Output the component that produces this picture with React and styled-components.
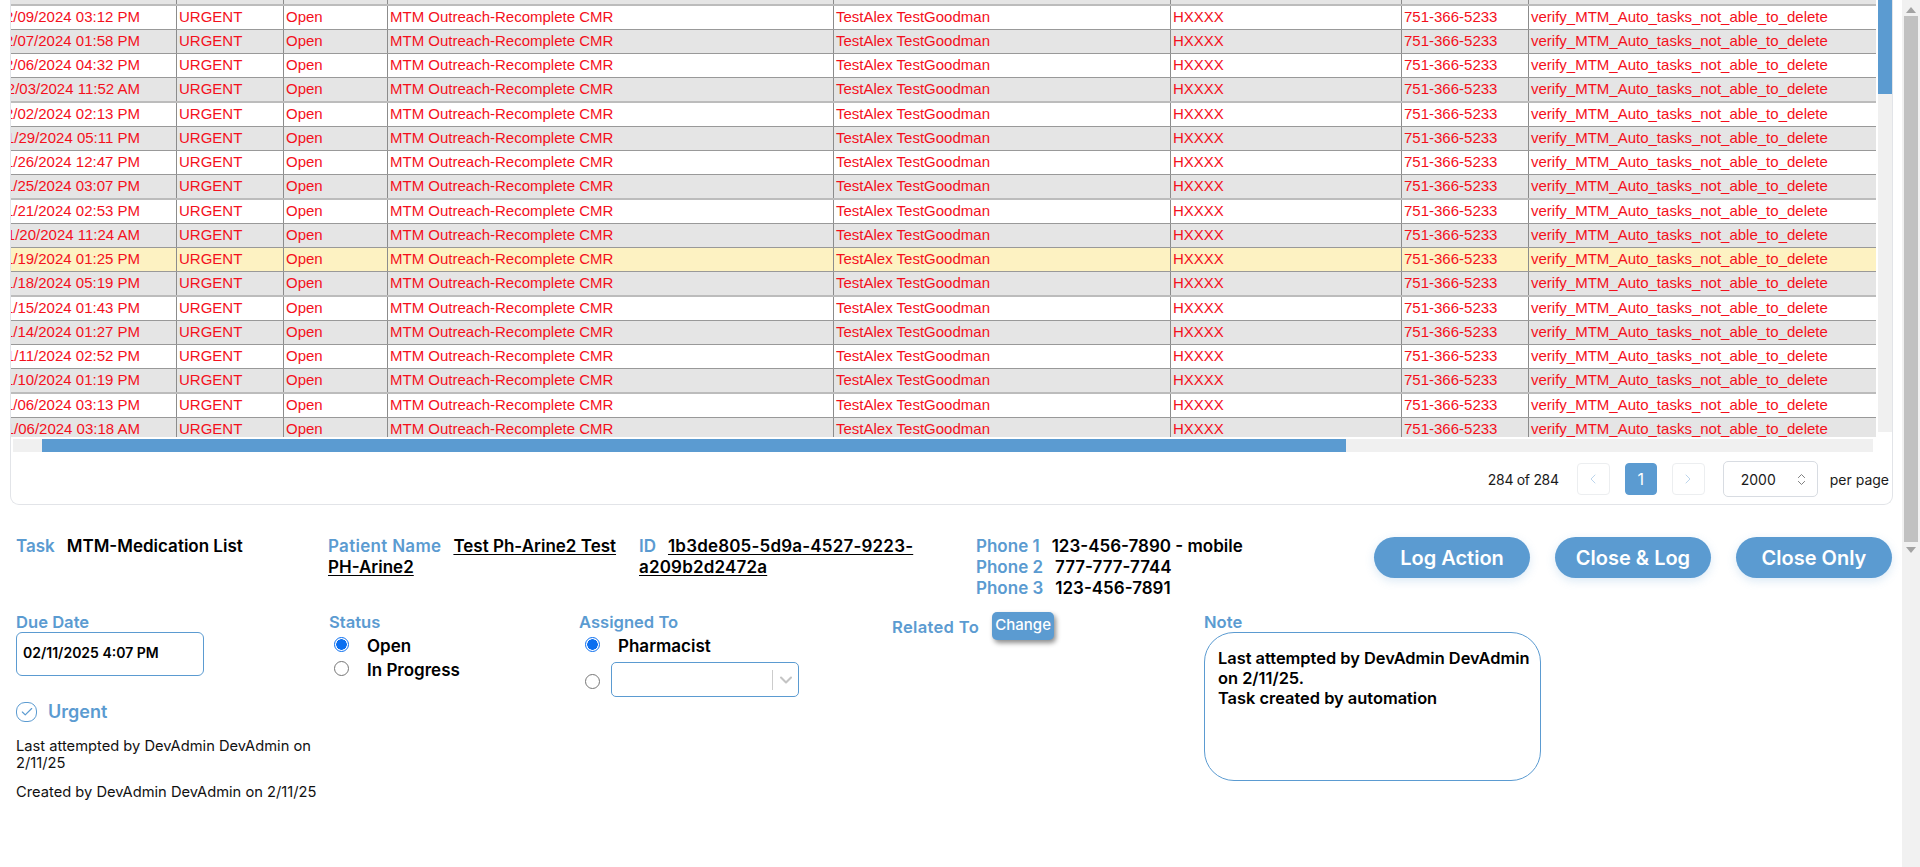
import styled, { createGlobalStyle } from 'styled-components'
import { ChevronLeft, ChevronRight, ChevronDown, ChevronsUpDown, Check } from 'lucide-react'

const GlobalStyle = createGlobalStyle`
  html, body { margin: 0; padding: 0; height: 100%; overflow: hidden; background: #fff; }
  * { box-sizing: border-box; }
`

const dates = [
  '12/09/2024 03:12 PM', '12/07/2024 01:58 PM', '12/06/2024 04:32 PM', '12/03/2024 11:52 AM',
  '12/02/2024 02:13 PM', '11/29/2024 05:11 PM', '11/26/2024 12:47 PM', '11/25/2024 03:07 PM',
  '11/21/2024 02:53 PM', '11/20/2024 11:24 AM', '11/19/2024 01:25 PM', '11/18/2024 05:19 PM',
  '11/15/2024 01:43 PM', '11/14/2024 01:27 PM', '11/11/2024 02:52 PM', '11/10/2024 01:19 PM',
  '11/06/2024 03:13 PM', '11/06/2024 03:18 AM',
]

const BLUE = '#5b9bd1'

const Page = styled.div`
  display: flex;
  width: 1920px;
  height: 867px;
  overflow: hidden;
`
const Content = styled.div`
  width: 1902px;
  font-family: Inter, "Liberation Sans", sans-serif;
`
const Card = styled.div`
  width: 1883px;
  height: 505px;
  margin-left: 10px;
  border: 1px solid #e2e4e8;
  border-top: none;
  border-radius: 0 0 9px 9px;
  display: flex;
  flex-direction: column;
`
const TableArea = styled.div`
  display: flex;
  height: 437px;
`
const TableClip = styled.div`
  width: 1865px;
  height: 437px;
  overflow: hidden;
`
const Table = styled.div`
  margin-top: -20px;
  margin-left: -27px;
  width: 1892px;
  font-family: "Liberation Sans", Arial, sans-serif;
  font-size: 15px;
  color: #f4101c;
`
const Row = styled.div`
  display: grid;
  grid-template-columns: 193px 107px 104px 446px 337px 231px 127px 347px;
  height: ${p => (p.$long ? 25 : 24)}px;
  background: ${p => (p.$active ? '#fdf2c2' : p.$odd ? '#e5e5e5' : '#fff')};
  border-top: ${p => (p.$long ? '2px solid #bcbcbc' : '1px solid #999')};
`
const Cell = styled.div`
  padding: 0 0 0 2px;
  border-right: 1px solid #8c8c8c;
  line-height: 22px;
  white-space: nowrap;
  overflow: hidden;
  &:last-child { border-right: none; }
`
const DateCell = styled(Cell)`
  padding-left: 0;
  text-align: right;
  padding-right: 36px;
`
const VTrack = styled.div`
  width: 14px;
  height: 432px;
  margin-left: 2px;
  background: #f0f0f0;
`
const VThumb = styled.div`
  width: 14px;
  height: 94px;
  background: ${BLUE};
`
const HTrack = styled.div`
  width: 1860px;
  height: 13px;
  margin: 2px 0 0 2px;
  background: #f0f0f0;
  padding-left: 29px;
`
const HThumb = styled.div`
  width: 1304px;
  height: 13px;
  background: ${BLUE};
`
const Pager = styled.div`
  display: flex;
  align-items: center;
  justify-content: flex-end;
  height: 36px;
  margin-top: 9px;
  padding-right: 3px;
  font-size: 14px;
  color: #1a1a1a;
`
const PageCount = styled.span`
  margin-right: 18px;
  letter-spacing: -0.3px;
`
const PageBtn = styled.div`
  width: ${p => (p.$active ? 32 : 33)}px;
  height: 32px;
  margin-right: 15px;
  border-radius: 4px;
  display: flex;
  align-items: center;
  justify-content: center;
  border: 1px solid ${p => (p.$active ? BLUE : '#eceef0')};
  background: ${p => (p.$active ? BLUE : '#fff')};
  color: ${p => (p.$active ? '#fff' : '#bcd5ec')};
  font-size: 16px;
`
const PerPage = styled.div`
  width: 95px;
  height: 36px;
  margin: 0 12px 0 3px;
  padding: 0 8px 0 17px;
  border: 1px solid #d8dce2;
  border-radius: 5px;
  display: flex;
  align-items: center;
  justify-content: space-between;
  color: #1a1a1a;
`
const TopRow = styled.div`
  display: flex;
  align-items: flex-start;
  margin-top: 31px;
  padding-left: 16px;
  height: 64px;
  font-size: 17px;
  font-weight: 600;
  line-height: 21px;
  color: #000;
`
const InfoCell = styled.div`
  width: ${p => p.$width}px;
  padding-right: ${p => p.$pad || 0}px;
  flex: none;
`
const Label = styled.span`
  color: ${BLUE};
  margin-right: 12px;
  font-weight: 600;
`
const NameLabel = styled(Label)`
  letter-spacing: 0.3px;
`
const Linked = styled.span`
  text-decoration: underline;
  text-underline-offset: 2px;
`
const IdValue = styled(Linked)`
  letter-spacing: 0.18px;
`
const PhoneLine = styled.div`
  white-space: nowrap;
`
const Actions = styled.div`
  margin-left: auto;
  margin-top: 1px;
  display: flex;
  gap: 25px;
  padding-right: 10px;
`
const ActionBtn = styled.button`
  width: 156px;
  height: 41px;
  border: none;
  border-radius: 21px;
  background: ${BLUE};
  color: #fff;
  font-family: inherit;
  font-size: 20px;
  font-weight: 600;
  box-shadow: 0 3px 10px rgba(91, 155, 209, 0.22);
`
const FormRow = styled.div`
  display: flex;
  align-items: flex-start;
  padding-left: 16px;
  margin-top: 12px;
  font-size: 17px;
  font-weight: 600;
  color: #000;
`
const Column = styled.div`
  width: ${p => p.$width}px;
  flex: none;
`
const FieldLabel = styled.div`
  color: ${BLUE};
  font-size: 16.6px;
  font-weight: 600;
  line-height: 20px;
`
const DateInput = styled.div`
  width: 188px;
  height: 44px;
  border: 1px solid ${BLUE};
  border-radius: 6px;
  padding: 10px 0 0 6px;
  font-size: 14px;
  font-weight: 600;
  line-height: 20px;
`
const UrgentRow = styled.div`
  display: flex;
  align-items: center;
  gap: 11px;
  margin-top: 25px;
  color: ${BLUE};
  font-size: 18px;
  font-weight: 600;
  line-height: 22px;
`
const CheckBadge = styled.span`
  width: 21px;
  height: 20px;
  border: 1.5px solid ${BLUE};
  border-radius: 9px;
  display: flex;
  align-items: center;
  justify-content: center;
  color: ${BLUE};
`
const Meta = styled.p`
  width: 310px;
  margin: ${p => p.$top}px 0 0;
  font-size: 14.7px;
  font-weight: 400;
  line-height: 17px;
  color: #111;
`
const RadioLine = styled.div`
  display: flex;
  align-items: center;
  height: 24px;
  padding-top: 3px;
  padding-left: ${p => p.$indent || 5}px;
`
const Radio = styled.span`
  width: 15px;
  height: 15px;
  margin-top: ${p => p.$top || 0}px;
  margin-right: ${p => p.$gap || 18}px;
  border-radius: 50%;
  flex: none;
  border: ${p => (p.$on ? '1px solid #0b6ff0' : '1px solid #767676')};
  background: ${p => (p.$on ? 'radial-gradient(circle, #0b6ff0 0 5px, #fff 5.5px)' : '#fff')};
`
const SelectRow = styled.div`
  display: flex;
  align-items: center;
  margin-top: 6px;
  padding-left: 6px;
`
const SelectBox = styled.div`
  width: 188px;
  height: 35px;
  border: 1px solid ${BLUE};
  border-radius: 5px;
  display: flex;
  align-items: center;
  justify-content: flex-end;
  padding-right: 2px;
  color: #c4c4c4;
`
const Divider = styled.span`
  width: 1px;
  height: 20px;
  margin-right: 3px;
  background: #ccc;
`
const RelatedRow = styled.div`
  display: flex;
  align-items: flex-start;
  gap: 13px;
`
const RelatedLabel = styled(FieldLabel)`
  margin-top: 5px;
  white-space: nowrap;
  letter-spacing: 0.3px;
`
const ChangeBtn = styled.button`
  width: 62px;
  height: 28px;
  padding: 0 0 3px;
  border: none;
  border-radius: 5px;
  background: ${BLUE};
  color: #fff;
  font-family: inherit;
  font-size: 15px;
  font-weight: 500;
  box-shadow: 2px 3px 5px rgba(0, 0, 0, 0.45);
`
const NoteBox = styled.div`
  width: 337px;
  height: 149px;
  padding: 15px 4px 0 13px;
  border: 1px solid ${BLUE};
  border-radius: 30px;
  font-size: 16.4px;
  line-height: 20px;
  font-weight: 600;
`
const PageBar = styled.div`
  width: 18px;
  height: 867px;
  background: #f1f1f1;
  display: flex;
  flex-direction: column;
  align-items: center;
`
const BarThumb = styled.div`
  width: 14px;
  height: 526px;
  margin-top: 323px;
  background: #c1c1c1;
`
const BarArrow = styled.svg`
  width: 10px;
  height: 6px;
  margin: ${p => p.$margin};
  fill: #a3a3a3;
`

function TaskRow({ date, index }) {
  return (
    <Row $odd={index % 2 === 0} $active={date.startsWith('11/19')} $long={index % 4 === 1}>
      <DateCell>{date}</DateCell>
      <Cell>URGENT</Cell>
      <Cell>Open</Cell>
      <Cell>MTM Outreach-Recomplete CMR</Cell>
      <Cell>TestAlex TestGoodman</Cell>
      <Cell>HXXXX</Cell>
      <Cell>751-366-5233</Cell>
      <Cell>verify_MTM_Auto_tasks_not_able_to_delete</Cell>
    </Row>
  )
}

export default function App() {
  return (
    <Page>
      <GlobalStyle />
      <Content>
        <Card>
          <TableArea>
            <TableClip>
              <Table>
                {['', ...dates].map((d, i) => (
                  <TaskRow key={i} date={d || '12/10/2024 01:00 PM'} index={i} />
                ))}
              </Table>
            </TableClip>
            <VTrack><VThumb /></VTrack>
          </TableArea>
          <HTrack><HThumb /></HTrack>
          <Pager>
            <PageCount>284 of 284</PageCount>
            <PageBtn><ChevronLeft size={16} strokeWidth={1.5} /></PageBtn>
            <PageBtn $active>1</PageBtn>
            <PageBtn><ChevronRight size={16} strokeWidth={1.5} /></PageBtn>
            <PerPage>
              2000
              <ChevronsUpDown size={15} color="#777" strokeWidth={1.5} />
            </PerPage>
            per page
          </Pager>
        </Card>

        <TopRow>
          <InfoCell $width={312}>
            <Label>Task</Label>MTM-Medication List
          </InfoCell>
          <InfoCell $width={311} $pad={10}>
            <NameLabel>Patient Name</NameLabel><Linked>Test Ph-Arine2 Test PH-Arine2</Linked>
          </InfoCell>
          <InfoCell $width={337} $pad={40}>
            <Label>ID</Label><IdValue>1b3de805-5d9a-4527-9223-a209b2d2472a</IdValue>
          </InfoCell>
          <InfoCell $width={300}>
            <PhoneLine><Label>Phone 1</Label>123-456-7890 - mobile</PhoneLine>
            <PhoneLine><Label>Phone 2</Label>777-777-7744</PhoneLine>
            <PhoneLine><Label>Phone 3</Label>123-456-7891</PhoneLine>
          </InfoCell>
          <Actions>
            <ActionBtn>Log Action</ActionBtn>
            <ActionBtn>Close &amp; Log</ActionBtn>
            <ActionBtn>Close Only</ActionBtn>
          </Actions>
        </TopRow>

        <FormRow>
          <Column $width={313}>
            <FieldLabel>Due Date</FieldLabel>
            <DateInput>02/11/2025 4:07 PM</DateInput>
            <UrgentRow>
              <CheckBadge><Check size={14} strokeWidth={2} /></CheckBadge>
              Urgent
            </UrgentRow>
            <Meta $top={15}>Last attempted by DevAdmin DevAdmin on 2/11/25</Meta>
            <Meta $top={12}>Created by DevAdmin DevAdmin on 2/11/25</Meta>
          </Column>
          <Column $width={250}>
            <FieldLabel>Status</FieldLabel>
            <RadioLine><Radio $on $top={-2} />Open</RadioLine>
            <RadioLine><Radio $top={-2} />In Progress</RadioLine>
          </Column>
          <Column $width={313}>
            <FieldLabel>Assigned To</FieldLabel>
            <RadioLine $indent={6}><Radio $on $top={-2} />Pharmacist</RadioLine>
            <SelectRow>
              <Radio $gap={11} $top={4} />
              <SelectBox>
                <Divider />
                <ChevronDown size={20} strokeWidth={2.5} />
              </SelectBox>
            </SelectRow>
          </Column>
          <Column $width={312}>
            <RelatedRow>
              <RelatedLabel>Related To</RelatedLabel>
              <ChangeBtn>Change</ChangeBtn>
            </RelatedRow>
          </Column>
          <Column $width={337}>
            <FieldLabel>Note</FieldLabel>
            <NoteBox>
              Last attempted by DevAdmin DevAdmin on 2/11/25.
              <br />
              Task created by automation
            </NoteBox>
          </Column>
        </FormRow>
      </Content>
      <PageBar>
        <BarArrow $margin="7px 0 -320px" viewBox="0 0 10 6"><path d="M5 0l5 6H0z" /></BarArrow>
        <BarThumb />
        <BarArrow $margin="5px 0 0" viewBox="0 0 10 6"><path d="M5 6L0 0h10z" /></BarArrow>
      </PageBar>
    </Page>
  )
}
